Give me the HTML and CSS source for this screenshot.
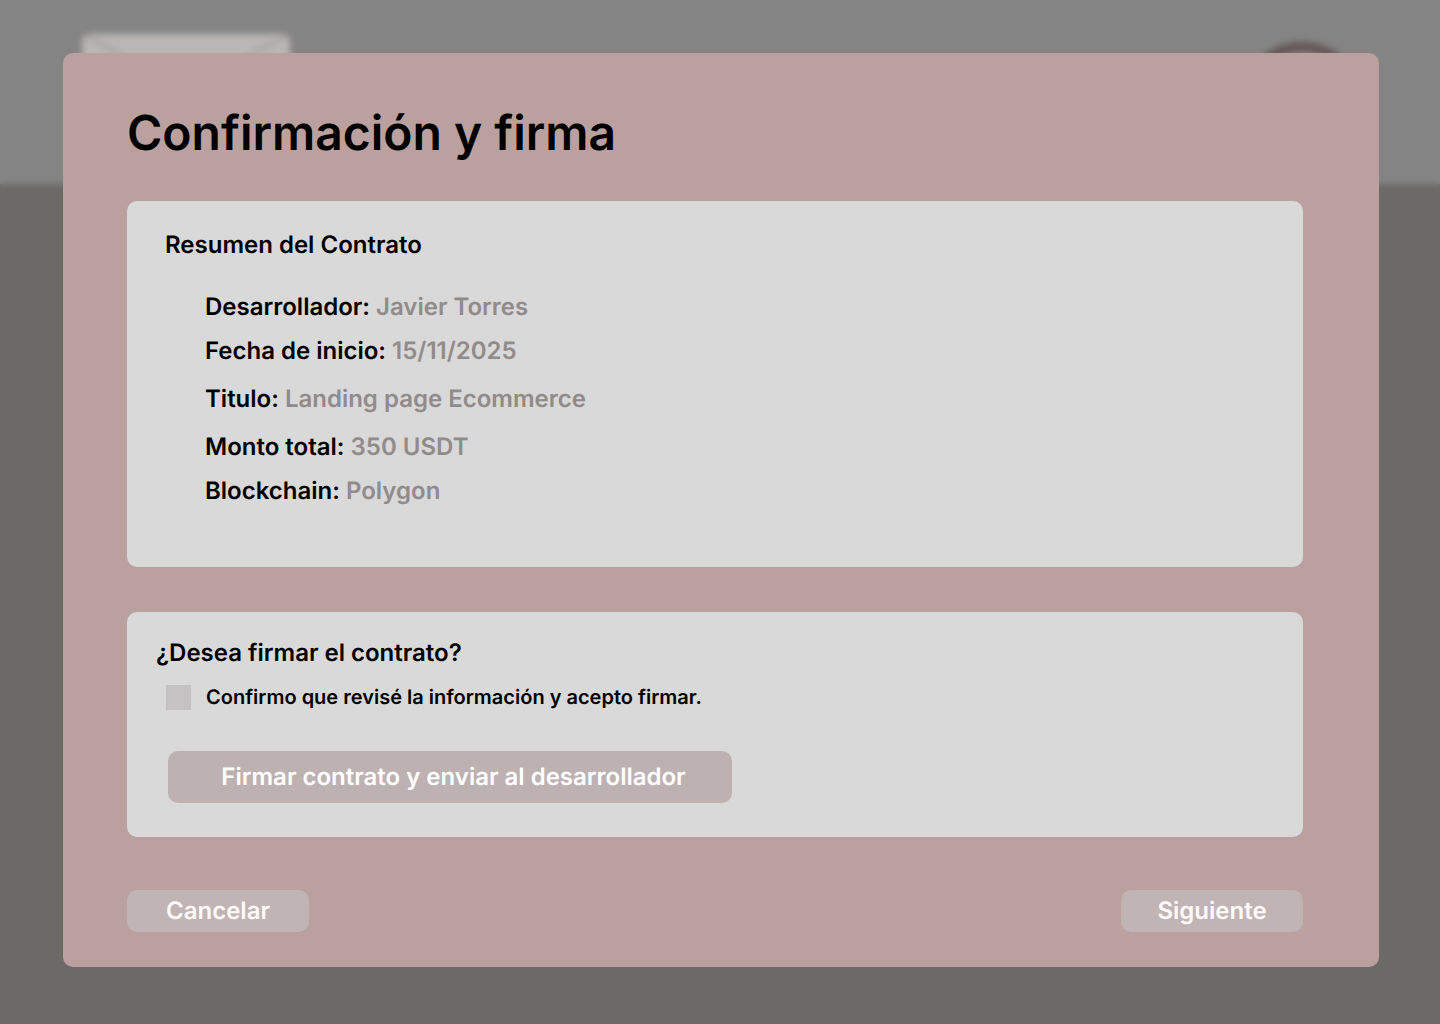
FILE: index.html
```html
<!DOCTYPE html>
<html lang="es">
<head>
  <meta charset="utf-8">
  <meta name="viewport" content="width=device-width, initial-scale=1">
  <title>Confirmación y firma</title>
  <link rel="stylesheet" href="styles.css">
</head>
<body>
  <header class="site-header">
    <svg class="logo" viewBox="0 0 208 120" aria-hidden="true">
      <rect width="208" height="120" rx="8" fill="#b9b6b4"/>
      <path d="M4 2 L104 56 L204 2" fill="none" stroke="#a8a5a3" stroke-width="4"/>
    </svg>
    <svg class="avatar" viewBox="0 0 124 124" aria-hidden="true">
      <circle cx="62" cy="62" r="57" fill="#8f8a8a" stroke="#655656" stroke-width="10"/>
    </svg>
  </header>

  <div class="overlay">
    <main class="dialog" role="dialog" aria-labelledby="dialog-title">
      <h1 class="dialog-title" id="dialog-title">Confirmación y firma</h1>

      <section class="card summary">
        <h2 class="card-title">Resumen del Contrato</h2>
        <dl class="details">
          <div class="detail"><dt>Desarrollador:</dt> <dd>Javier Torres</dd></div>
          <div class="detail"><dt>Fecha de inicio:</dt> <dd>15/11/2025</dd></div>
          <div class="detail detail-main"><dt>Titulo:</dt> <dd>Landing page Ecommerce</dd></div>
          <div class="detail"><dt>Monto total:</dt> <dd>350 USDT</dd></div>
          <div class="detail"><dt>Blockchain:</dt> <dd>Polygon</dd></div>
        </dl>
      </section>

      <section class="card signing">
        <h2 class="card-title">¿Desea firmar el contrato?</h2>
        <div class="consent">
          <input class="consent-box" type="checkbox" id="consent">
          <label class="consent-label" for="consent">Confirmo que revisé la información y acepto firmar.</label>
        </div>
        <button class="button button-sign" type="button">Firmar contrato y enviar al desarrollador</button>
      </section>

      <footer class="actions">
        <button class="button button-nav" type="button">Cancelar</button>
        <button class="button button-nav" type="button">Siguiente</button>
      </footer>
    </main>
  </div>
</body>
</html>
```

FILE: styles.css
```css
* {
  box-sizing: border-box;
}

body {
  margin: 0;
  min-height: 100vh;
  background: #6c6a67;
  color: #000;
  font-family: Inter, "Liberation Sans", sans-serif;
  font-size: 24px;
  font-weight: 600;
  line-height: 28px;
  font-optical-sizing: none;
  text-rendering: geometricPrecision;
}

h1,
h2,
dl,
dd {
  margin: 0;
  font-weight: inherit;
}

/* Page behind the dialog */
.site-header {
  display: flex;
  justify-content: space-between;
  align-items: flex-start;
  height: 184px;
  padding: 34px 76px 0 82px;
  background: #848484;
}

.logo {
  width: 208px;
  height: 120px;
}

.avatar {
  width: 124px;
  height: 124px;
  margin-top: 8px;
}

.overlay {
  position: absolute;
  top: 0;
  left: 0;
  width: 100%;
  min-height: 100%;
  padding: 53px 61px 57px 63px;
  backdrop-filter: blur(3px);
}

/* Dialog */
.dialog {
  padding: 50px 76px 35px 64px;
  border-radius: 10px;
  background: #bba0a0;
}

.dialog-title {
  margin-bottom: 38px;
  font-size: 48px;
  font-weight: 600;
  line-height: 60px;
}

.card {
  border-radius: 10px;
  background: #d9d9d9;
}

.card-title {
  font-size: 24px;
}

.summary {
  padding: 30px 38px 62px;
}

.details {
  display: flex;
  flex-direction: column;
  gap: 16px;
  margin-top: 34px;
  padding-left: 40px;
}

.detail-main {
  margin: 4px 0;
}

.detail dt,
.detail dd {
  display: inline;
}

.detail dd {
  color: #918b8b;
}

.signing {
  margin-top: 45px;
  padding: 27px 29px 34px;
}

.consent {
  display: flex;
  align-items: center;
  gap: 15px;
  margin: 18px 0 41px 10px;
}

.consent-box {
  appearance: none;
  width: 25px;
  height: 25px;
  margin: 0;
  background: #c4c2c3;
}

.consent-box:checked {
  background: #bba0a0;
}

.consent-label {
  font-size: 20px;
  line-height: 25px;
}

.button {
  border: 0;
  border-radius: 10px;
  color: #fff;
  font: inherit;
  text-rendering: inherit;
  cursor: pointer;
}

.button-sign {
  display: block;
  width: 564px;
  max-width: 100%;
  height: 52px;
  margin-left: 12px;
  padding: 0 40px 0 47px;
  background: #beb1b1;
}

.actions {
  display: flex;
  justify-content: space-between;
  margin-top: 53px;
}

.button-nav {
  width: 182px;
  height: 42px;
  background: #c1b4b4;
  color: #fffafa;
}
```
